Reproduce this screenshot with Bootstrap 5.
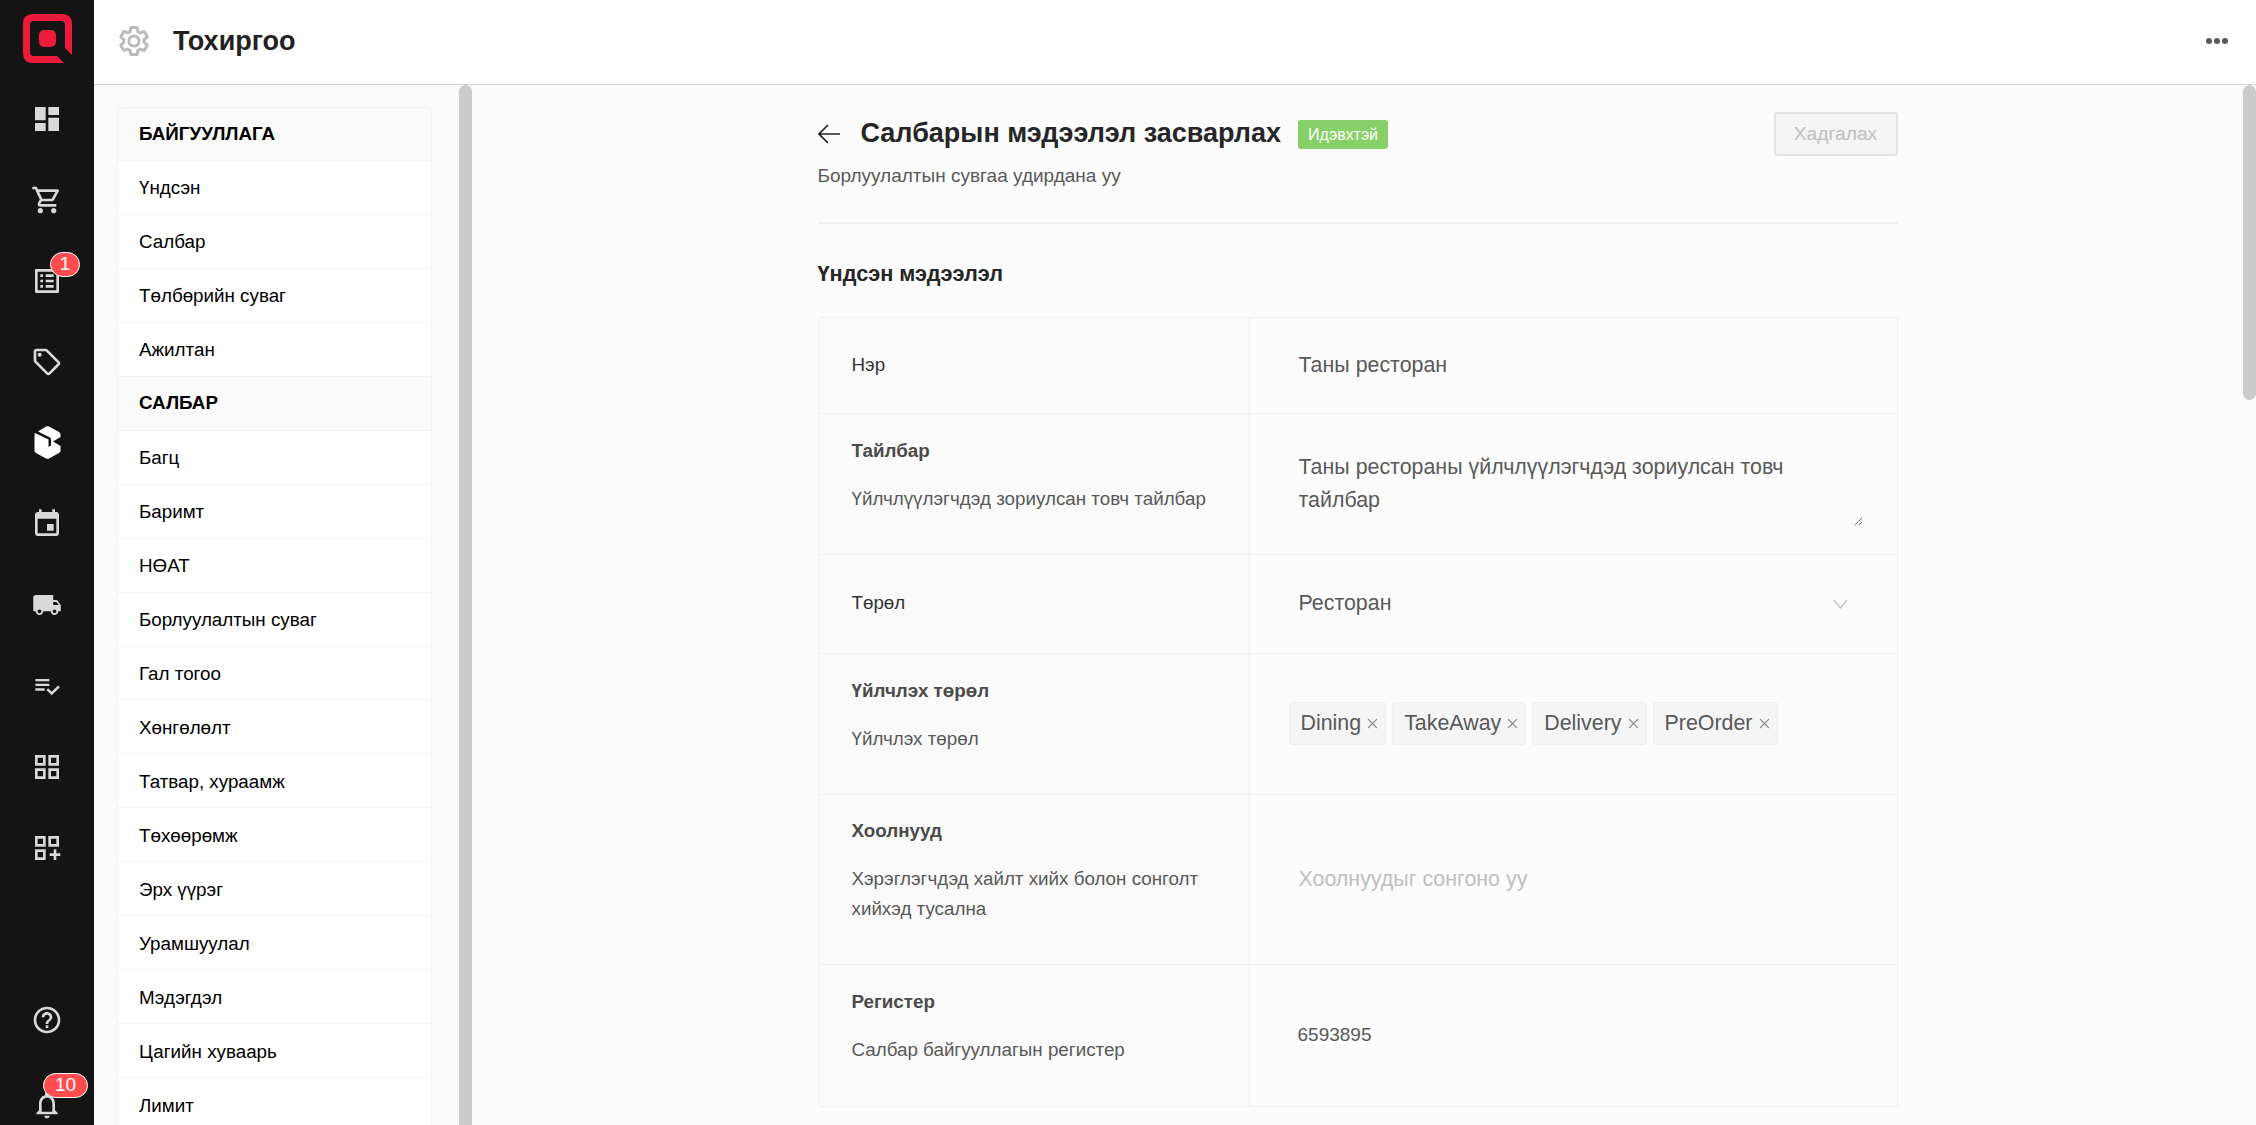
<!DOCTYPE html>
<html lang="mn"><head><meta charset="utf-8"><title>Тохиргоо</title>
<link href="https://cdn.jsdelivr.net/npm/bootstrap@5.3.0/dist/css/bootstrap.min.css" rel="stylesheet">
<style>
html,body{height:100%;overflow:hidden}
body{font-family:"Liberation Sans",Arial,sans-serif;background:#fcfcfc;color:#333}
.rail{width:94px;background:#141414;flex:none;height:100vh}
.rail-logo{height:78px;padding-top:14px}
.rail-link{height:81px;position:relative;align-self:stretch}
.rail-link svg{width:32px;height:32px;fill:#d9d9d9}
.rail-bottom{height:85px}
.rail-bell{height:40px;margin-top:23px}
.count{position:absolute;background:#ff4d4f;color:#fff;border:1.5px solid #fff;border-radius:15px;font-size:19px;line-height:22px;height:25px;text-align:center;font-weight:400}
.count-a{width:30px;left:50px;top:12px}
.count-b{width:45px;left:43px;top:-12px}
.topbar{height:85px;background:#fff;border-bottom:1px solid #d0d0d0;flex:none;padding:0 27px 2px 23px}
.topbar h1{font-size:27px;font-weight:700;color:#222;margin:0 0 0 22px}
.gear{width:34px;height:34px;fill:none;stroke:#bbb;stroke-width:2.1}
.dots{width:24px;height:8px;fill:#595959}
.panes{min-height:0;overflow:hidden}
.side-pane{width:378px;flex:none;height:1040px;overflow:hidden;background:#fafafa;padding:22px 27px 0 23px;position:relative}
.thumb{position:absolute;top:0;right:0;width:13px;background:#cbcbcb;border-radius:7px}
.thumb-side{height:1070px}
.thumb-main{height:315px}
.menu{width:315px;--bs-list-group-border-color:#f2f2f2;--bs-list-group-border-radius:5px}
.menu .list-group-item{height:53.96px;padding:2px 0 0 21px;display:flex;align-items:center;font-size:18.8px;color:#000;background:#fff}
.menu .menu-head{background:#fafafa;font-weight:700;padding-top:0}
.main-pane{overflow:hidden;height:1040px;padding-right:13px;position:relative}
.sheet{width:1080px;margin:0 auto}
.page-head{padding-top:27px;height:139px;border-bottom:2px solid #f0f0f0}
.back{width:22px;height:22px;fill:none;stroke:#222;stroke-width:1.7;margin-right:21px}
.page-title{font-size:27px;line-height:42px;font-weight:700;color:#262626;margin:0 17px 2px 0}
.state{background:#87d068;color:#fff;font-size:16px;line-height:29px;padding:0 10px;border-radius:3px}
.save{width:124px;height:44px;--bs-btn-disabled-bg:#f5f5f5;--bs-btn-disabled-border-color:#e3e3e3;--bs-btn-disabled-color:#bfbfbf;--bs-btn-disabled-opacity:1;border-width:2px;border-radius:3px;font-size:19.2px;padding:0}
.page-sub{font-size:19px;color:#595959;margin-top:6px}
.sec-title{font-size:21.7px;font-weight:700;color:#262626;margin:34px 0 26px}
.form-box{border:1px solid #f0f0f0;border-radius:3px;background:#fcfcfc}
.form-row{border-bottom:1px solid #f0f0f0}
.form-row:last-child{border-bottom:0}
.form-label-col{width:431px;flex:none;background:#fafafa;border-right:1px solid #f0f0f0;padding:0 33px;font-size:18.8px;color:#333}
.form-label-stack{padding-bottom:20px}
.form-label-col b{display:block;color:#4a4a4a;margin-bottom:17px;line-height:33px}
.form-label-col span{display:block;color:#595959;line-height:30px}
.form-val{padding:0 34px 0 49px;font-size:21.4px;color:#595959;min-width:0}
.h-96{height:96px}.h-141{height:141px}.h-99{height:99px}.h-170{height:170px}
.memo{width:100%;height:84px;line-height:33px;resize:vertical;overflow:auto;padding:9px 24px 0 0}
.chev{width:15px;height:10px;fill:none;stroke:#bfbfbf;stroke-width:1.2;margin-right:15px}
.chips{margin-left:-10px;gap:6px}
.chip{height:43px;background:#f5f5f5;border:1px solid #f0f0f0;border-radius:3px;padding:0 7px 0 11px;font-size:21.4px;color:#595959;gap:6px}
.chip svg{width:11px;height:11px;stroke:#8c8c8c;stroke-width:1.1;fill:none}
.ph{color:#bfbfbf}
.reg{font-size:19px;margin-left:-1px}
</style></head>
<body>
<div class="d-flex vh-100">
  <nav class="rail d-flex flex-column align-items-center">
    <div class="rail-logo">
      <svg width="49" height="49" viewBox="0 0 49 49" fill="#ed1b3b"><path d="M10 0H39Q49 0 49 10V41L42 34V11Q42 7 38 7H11Q7 7 7 11V38Q7 42 11 42H34L41 49H10Q0 49 0 39V10Q0 0 10 0Z"/><rect x="16" y="16" width="17" height="17" rx="5"/></svg>
    </div>
    <a class="rail-link d-flex align-items-center justify-content-center"><svg viewBox="0 0 24 24"><path d="M3 13h8V3H3v10zm0 8h8v-6H3v6zm10 0h8V11h-8v10zm0-18v6h8V3h-8z"/></svg></a>
    <a class="rail-link d-flex align-items-center justify-content-center"><svg viewBox="0 0 24 24"><path d="M15.55 13c.75 0 1.41-.41 1.75-1.03l3.58-6.49A.996.996 0 0 0 20.01 4H5.21l-.94-2H1v2h2l3.6 7.59-1.35 2.44C4.52 15.37 5.48 17 7 17h12v-2H7l1.1-2h7.45zM6.16 6h12.15l-2.76 5H8.53L6.16 6zM7 18c-1.1 0-1.99.9-1.99 2S5.9 22 7 22s2-.9 2-2-.9-2-2-2zm10 0c-1.1 0-1.99.9-1.99 2s.89 2 1.99 2 2-.9 2-2-.9-2-2-2z"/></svg></a>
    <a class="rail-link d-flex align-items-center justify-content-center"><svg viewBox="0 0 24 24"><path d="M11 7h6v2h-6zm0 4h6v2h-6zm0 4h6v2h-6zM7 7h2v2H7zm0 4h2v2H7zm0 4h2v2H7zM20.1 3H3.9c-.5 0-.9.4-.9.9v16.2c0 .4.4.9.9.9h16.2c.4 0 .9-.5.9-.9V3.9c0-.5-.5-.9-.9-.9zM19 19H5V5h14v14z"/></svg><span class="badge count count-a p-0">1</span></a>
    <a class="rail-link d-flex align-items-center justify-content-center"><svg viewBox="0 0 24 24"><path d="M21.41 11.58l-9-9C12.05 2.22 11.55 2 11 2H4c-1.1 0-2 .9-2 2v7c0 .55.22 1.05.59 1.42l9 9c.36.36.86.58 1.41.58s1.05-.22 1.41-.59l7-7c.37-.36.59-.86.59-1.41s-.23-1.06-.59-1.42zM13 20.01L4 11V4h7v-.01l9 9-7 7.02z"/><circle cx="6.5" cy="6.5" r="1.5"/></svg></a>
    <a class="rail-link d-flex align-items-center justify-content-center"><svg style="width:27px;height:33px;fill:#fff" viewBox="0 0 27 33"><path d="M12 .6Q13.5 0 15 .6L25 6Q26.5 7 26.5 8.5V11L19 15.5 26.5 20V24.5Q26.5 26 25 27L15 32.4Q13.5 33 12 32.4L2 27Q.5 26 .5 24.5V8.5Q.5 7.500 1 7L14.500 13.500V21L17 19.500V13Q17 12 16 11.500L4 5.500Z"/></svg></a>
    <a class="rail-link d-flex align-items-center justify-content-center"><svg viewBox="0 0 24 24"><path d="M19 3h-1V1h-2v2H8V1H6v2H5c-1.110 0-1.990.9-1.990 2L3 19c0 1.100.89 2 2 2h14c1.100 0 2-.9 2-2V5c0-1.100-.9-2-2-2zm0 16H5V8h14v11zM17 12h-5v5h5v-5z"/></svg></a>
    <a class="rail-link d-flex align-items-center justify-content-center"><svg viewBox="0 0 24 24" style="width:30px;height:30px"><path d="M20 8h-3V4H3c-1.100 0-2 .9-2 2v11h2c0 1.660 1.340 3 3 3s3-1.340 3-3h6c0 1.660 1.340 3 3 3s3-1.340 3-3h2v-5l-3-4zM6 18.500c-.83 0-1.500-.67-1.500-1.500s.67-1.500 1.500-1.500 1.500.67 1.500 1.500-.67 1.500-1.500 1.500zm13.500-9l1.960 2.500H17V9.500h2.500zm-1.500 9c-.83 0-1.500-.67-1.500-1.500s.67-1.500 1.500-1.500 1.500.67 1.500 1.500-.67 1.500-1.500 1.500z"/></svg></a>
    <a class="rail-link d-flex align-items-center justify-content-center"><svg viewBox="0 0 24 24" style="width:28px;height:28px"><path d="M14 10H2v2h12v-2zm0-4H2v2h12V6zM2 16h8v-2H2v2zm19.500-4.500L23 13l-6.990 7-4.510-4.500L13 14l3.010 3 5.490-5.500z"/></svg></a>
    <a class="rail-link d-flex align-items-center justify-content-center"><svg viewBox="0 0 24 24"><path d="M3 3v8h8V3H3zm6 6H5V5h4v4zm-6 4v8h8v-8H3zm6 6H5v-4h4v4zm4-16v8h8V3h-8zm6 6h-4V5h4v4zm-6 4v8h8v-8h-8zm6 6h-4v-4h4v4z"/></svg></a>
    <a class="rail-link d-flex align-items-center justify-content-center"><svg viewBox="0 0 24 24"><path d="M3 3v8h8V3H3zm6 6H5V5h4v4zm-6 4v8h8v-8H3zm6 6H5v-4h4v4zm4-16v8h8V3h-8zm6 6h-4V5h4v4zM17 13h2v3h3v2h-3v3h-2v-3h-3v-2h3z"/></svg></a>
    <a class="rail-link rail-bottom d-flex align-items-center justify-content-center mt-auto"><svg viewBox="0 0 24 24"><path d="M11 18h2v-2h-2v2zm1-16C6.480 2 2 6.480 2 12s4.480 10 10 10 10-4.480 10-10S17.520 2 12 2zm0 18c-4.410 0-8-3.590-8-8s3.590-8 8-8 8 3.590 8 8-3.590 8-8 8zm0-14c-2.210 0-4 1.790-4 4h2c0-1.100.9-2 2-2s2 .9 2 2c0 2-3 1.750-3 5h2c0-2.250 3-2.500 3-5 0-2.210-1.790-4-4-4z"/></svg></a>
    <a class="rail-link rail-bell d-flex align-items-center justify-content-center"><svg viewBox="0 0 24 24"><path d="M12 22c1.100 0 2-.9 2-2h-4c0 1.100.9 2 2 2zm6-6v-5c0-3.070-1.630-5.640-4.500-6.320V4c0-.83-.67-1.500-1.500-1.500s-1.500.67-1.500 1.500v.68C7.640 5.360 6 7.920 6 11v5l-2 2v1h16v-1l-2-2zm-2 1H8v-6c0-2.480 1.510-4.500 4-4.500s4 2.020 4 4.500v6z"/></svg><span class="badge count count-b p-0">10</span></a>
  </nav>
  <div class="flex-grow-1 d-flex flex-column" style="min-width:0">
    <header class="topbar d-flex align-items-center">
      <svg class="gear" viewBox="0 0 24 24"><path d="M19.140 12.940c.04-.3.06-.61.06-.94 0-.32-.02-.64-.07-.94l2.030-1.580c.18-.14.23-.41.12-.61l-1.920-3.320c-.12-.22-.37-.29-.59-.22l-2.390.96c-.5-.38-1.030-.7-1.620-.94l-.36-2.540c-.04-.24-.24-.41-.48-.41h-3.840c-.24 0-.43.17-.47.41l-.36 2.540c-.59.24-1.130.57-1.620.94l-2.390-.96c-.22-.08-.47 0-.59.22L2.740 8.870c-.12.21-.08.47.12.61l2.030 1.580c-.05.3-.09.63-.09.94s.02.64.07.94l-2.030 1.580c-.18.14-.23.41-.12.61l1.920 3.320c.12.22.37.29.59.22l2.390-.96c.5.38 1.030.7 1.620.94l.36 2.540c.05.24.24.41.48.41h3.840c.24 0 .44-.17.47-.41l.36-2.540c.59-.24 1.130-.56 1.620-.94l2.390.96c.22.08.47 0 .59-.22l1.920-3.320c.12-.22.07-.47-.12-.61l-2.010-1.580zM12 15.600c-1.980 0-3.600-1.620-3.600-3.600s1.620-3.600 3.600-3.600 3.600 1.620 3.600 3.600-1.620 3.600-3.600 3.600z"/></svg>
      <h1>Тохиргоо</h1>
      <svg class="dots ms-auto" viewBox="0 0 24 8"><circle cx="4" cy="4" r="3"/><circle cx="12" cy="4" r="3"/><circle cx="20" cy="4" r="3"/></svg>
    </header>
    <div class="panes d-flex flex-grow-1">
      <aside class="side-pane">
        <div class="list-group menu">
          <div class="list-group-item menu-head">БАЙГУУЛЛАГА</div>
          <a class="list-group-item">Үндсэн</a>
          <a class="list-group-item">Салбар</a>
          <a class="list-group-item">Төлбөрийн суваг</a>
          <a class="list-group-item">Ажилтан</a>
          <div class="list-group-item menu-head">САЛБАР</div>
          <a class="list-group-item">Багц</a>
          <a class="list-group-item">Баримт</a>
          <a class="list-group-item">НӨАТ</a>
          <a class="list-group-item">Борлуулалтын суваг</a>
          <a class="list-group-item">Гал тогоо</a>
          <a class="list-group-item">Хөнгөлөлт</a>
          <a class="list-group-item">Татвар, хураамж</a>
          <a class="list-group-item">Төхөөрөмж</a>
          <a class="list-group-item">Эрх үүрэг</a>
          <a class="list-group-item">Урамшуулал</a>
          <a class="list-group-item">Мэдэгдэл</a>
          <a class="list-group-item">Цагийн хуваарь</a>
          <a class="list-group-item">Лимит</a>
        </div>
        <div class="thumb thumb-side"></div>
      </aside>
      <main class="main-pane flex-grow-1">
        <div class="sheet">
          <div class="page-head">
            <div class="d-flex align-items-center">
              <svg class="back" viewBox="0 0 22 22"><path d="M22 11H1M10 2l-9 9 9 9"/></svg>
              <h2 class="page-title">Салбарын мэдээлэл засварлах</h2>
              <span class="state">Идэвхтэй</span>
              <button class="btn save ms-auto" disabled>Хадгалах</button>
            </div>
            <div class="page-sub">Борлуулалтын сувгаа удирдана уу</div>
          </div>
          <div class="sec-title">Үндсэн мэдээлэл</div>
          <div class="form-box">
            <div class="form-row d-flex h-96">
              <div class="form-label-col d-flex align-items-center">Нэр</div>
              <div class="form-val flex-grow-1 d-flex align-items-center">Таны ресторан</div>
            </div>
            <div class="form-row d-flex h-141">
              <div class="form-label-col form-label-stack d-flex flex-column justify-content-center"><b>Тайлбар</b><span>Үйлчлүүлэгчдэд зориулсан товч тайлбар</span></div>
              <div class="form-val flex-grow-1 d-flex align-items-center"><div class="memo">Таны рестораны үйлчлүүлэгчдэд зориулсан товч тайлбар</div></div>
            </div>
            <div class="form-row d-flex h-99">
              <div class="form-label-col d-flex align-items-center">Төрөл</div>
              <div class="form-val flex-grow-1 d-flex align-items-center justify-content-between">Ресторан<svg class="chev" viewBox="0 0 15 10"><path d="M1 1l6.500 8 6.500-8"/></svg></div>
            </div>
            <div class="form-row d-flex h-141">
              <div class="form-label-col form-label-stack d-flex flex-column justify-content-center"><b>Үйлчлэх төрөл</b><span>Үйлчлэх төрөл</span></div>
              <div class="form-val flex-grow-1 d-flex align-items-center"><div class="chips d-flex">
                <span class="chip d-flex align-items-center">Dining<svg viewBox="0 0 11 11"><path d="M1 1l9 9M10 1l-9 9"/></svg></span>
                <span class="chip d-flex align-items-center">TakeAway<svg viewBox="0 0 11 11"><path d="M1 1l9 9M10 1l-9 9"/></svg></span>
                <span class="chip d-flex align-items-center">Delivery<svg viewBox="0 0 11 11"><path d="M1 1l9 9M10 1l-9 9"/></svg></span>
                <span class="chip d-flex align-items-center">PreOrder<svg viewBox="0 0 11 11"><path d="M1 1l9 9M10 1l-9 9"/></svg></span>
              </div></div>
            </div>
            <div class="form-row d-flex h-170">
              <div class="form-label-col form-label-stack d-flex flex-column justify-content-center"><b>Хоолнууд</b><span>Хэрэглэгчдэд хайлт хийх болон сонголт хийхэд тусална</span></div>
              <div class="form-val flex-grow-1 d-flex align-items-center ph">Хоолнуудыг сонгоно уу</div>
            </div>
            <div class="form-row d-flex h-141">
              <div class="form-label-col form-label-stack d-flex flex-column justify-content-center"><b>Регистер</b><span>Салбар байгууллагын регистер</span></div>
              <div class="form-val flex-grow-1 d-flex align-items-center"><span class="reg">6593895</span></div>
            </div>
          </div>
        </div>
        <div class="thumb thumb-main"></div>
      </main>
    </div>
  </div>
</div>
<script src="https://cdn.jsdelivr.net/npm/bootstrap@5.3.0/dist/js/bootstrap.bundle.min.js"></script>
</body></html>
